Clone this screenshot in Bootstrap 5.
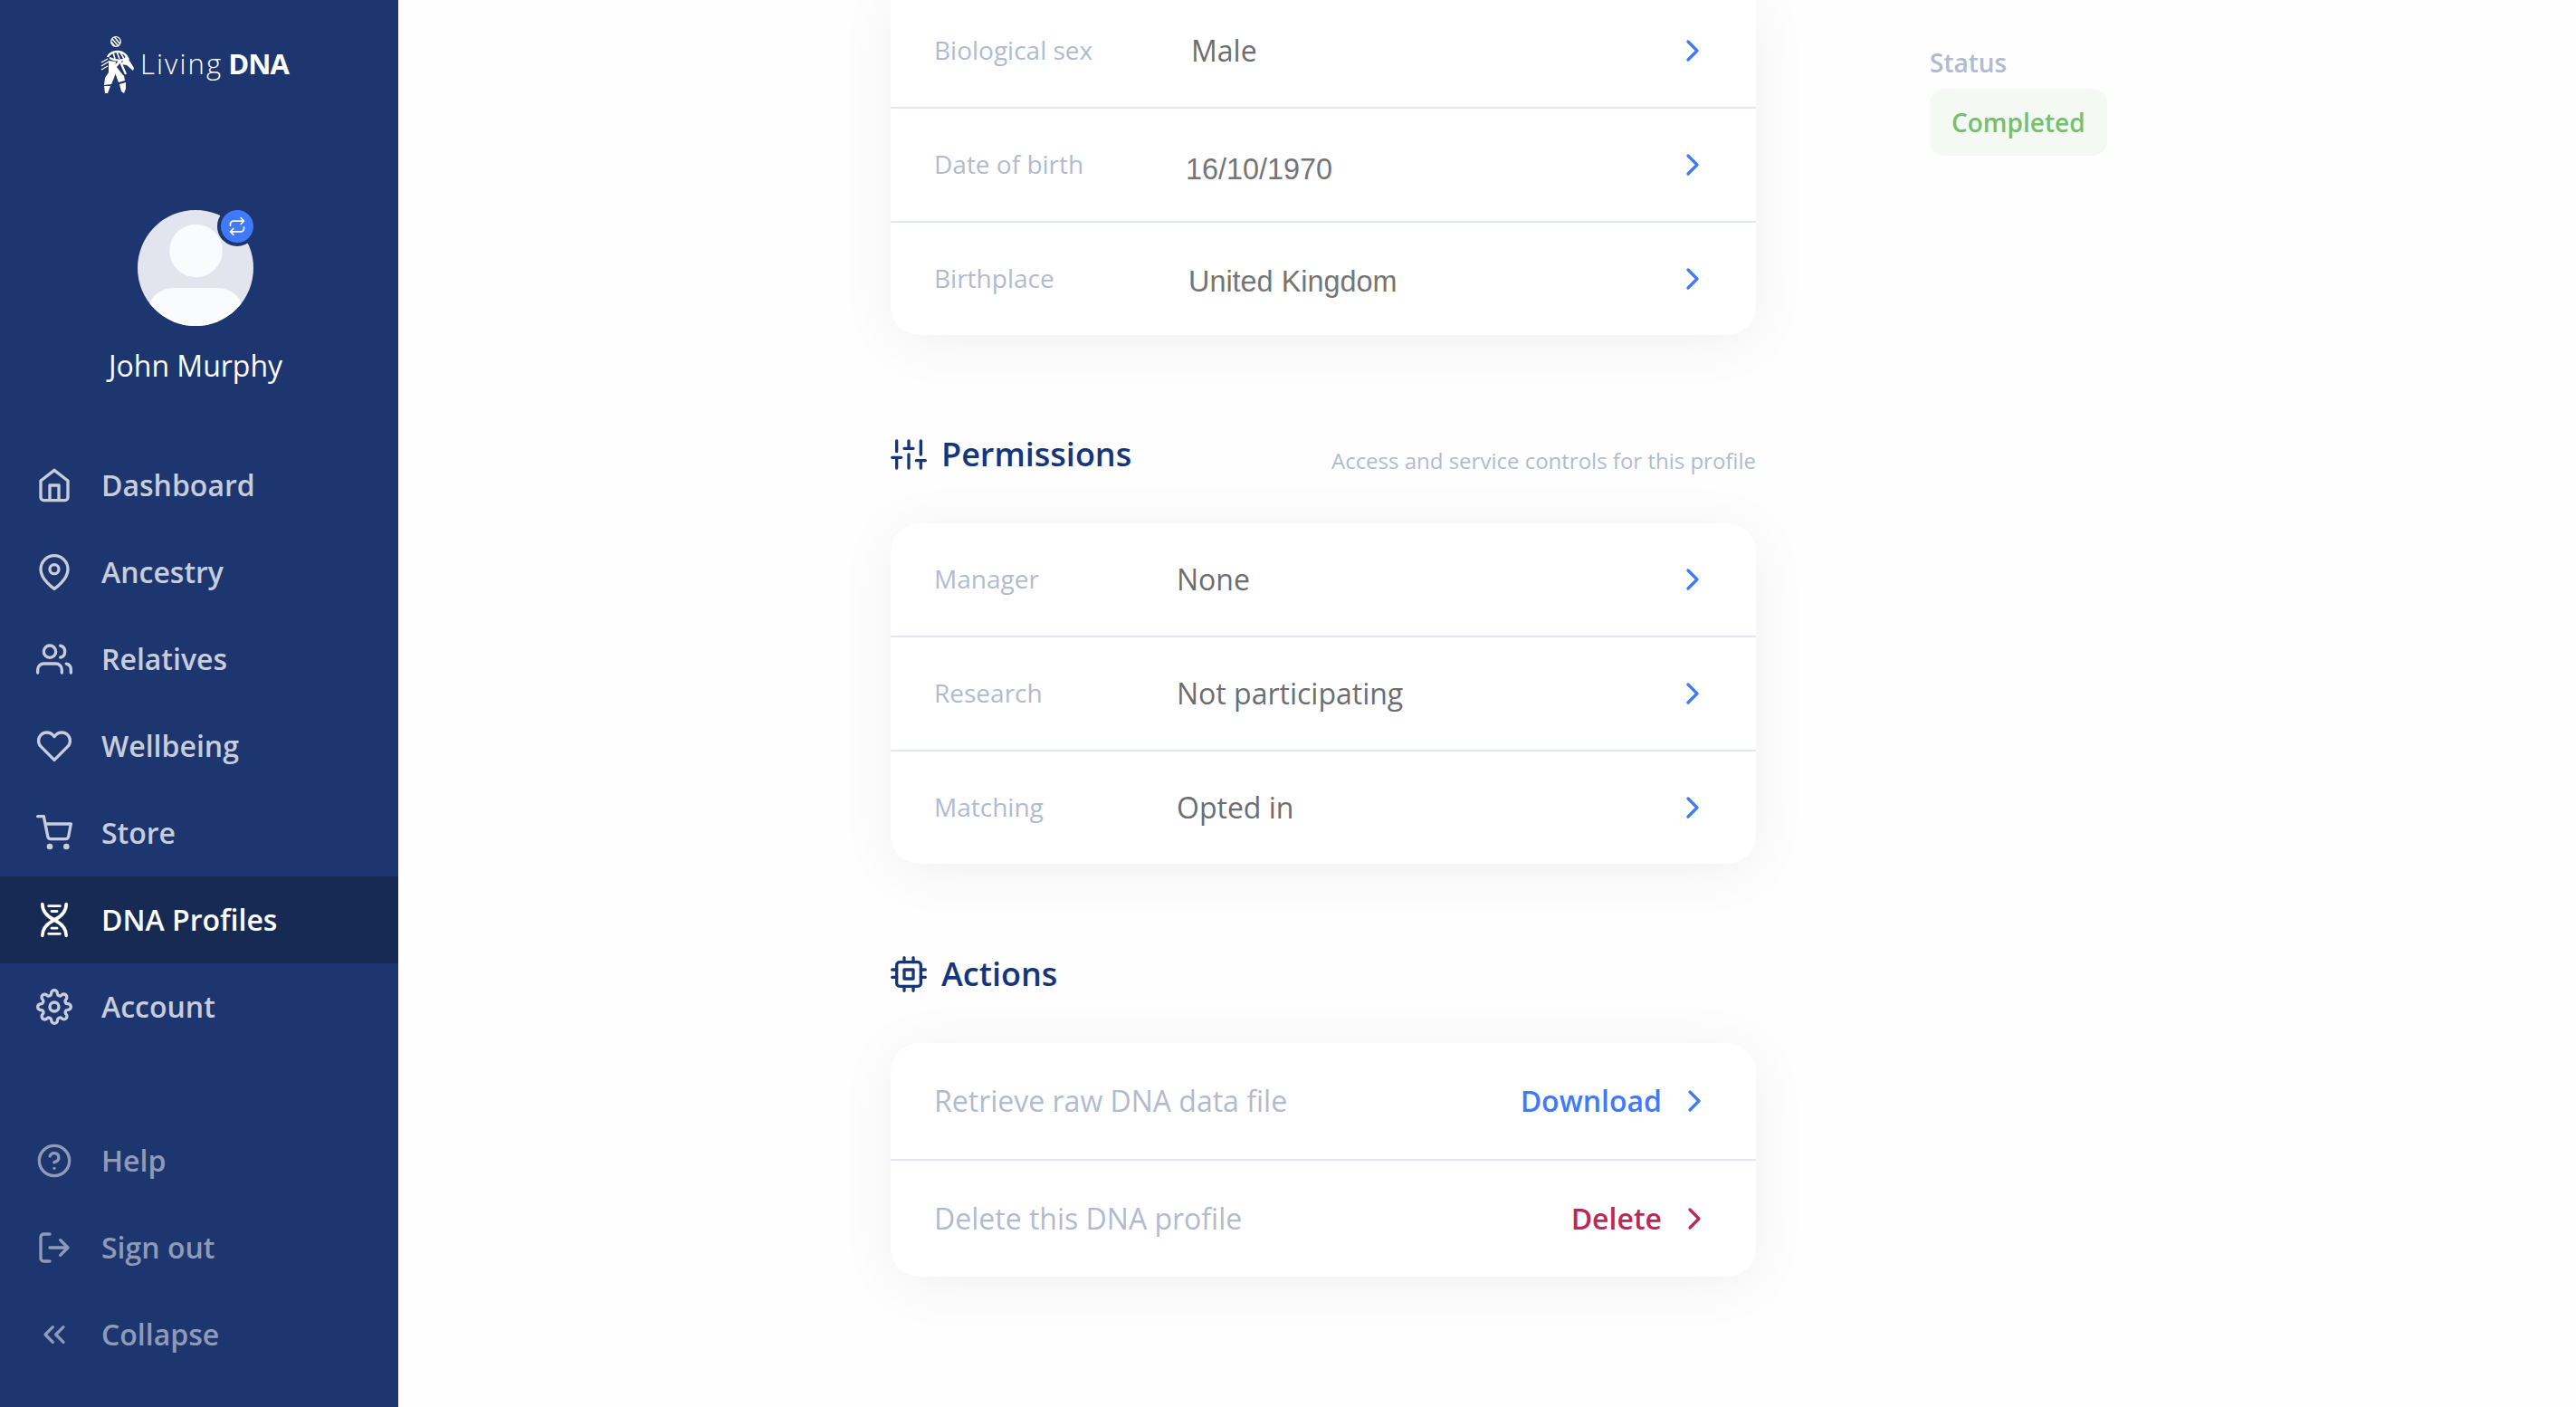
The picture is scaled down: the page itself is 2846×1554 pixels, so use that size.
<!DOCTYPE html>
<html lang="en">
<head>
    <meta charset="UTF-8">
    <meta name="viewport" content="width=device-width, initial-scale=1.0">
    <title>DNA Profiles - Living DNA</title>
    <link href="https://cdn.jsdelivr.net/npm/bootstrap@5.3.0/dist/css/bootstrap.min.css" rel="stylesheet">
    <style>
        :root {
            --navy: #1e366f;
            --navy-dark: #172a54;
            --heading: #16367b;
            --blue: #417af9;
            --red: #bd2858;
            --muted: #b0bbd1;
            --line: #e2e6ee;
            --value: #6c6d70;
        }

        body {
            font-family: "Open Sans", "Noto Sans", sans-serif;
            font-size: 32px;
            line-height: 44px;
            color: var(--value);
            background-color: #fefefe;
            height: 1554px;
            overflow: hidden;
        }

        .icon {
            width: 40px;
            height: 40px;
            fill: none;
            stroke: currentColor;
            stroke-width: 2;
            stroke-linecap: round;
            stroke-linejoin: round;
            flex-shrink: 0;
        }

        /* Sidebar */
        .sidebar {
            width: 440px;
            height: 1554px;
            background-color: var(--navy);
            color: #fff;
        }

        .brand {
            height: 72px;
            margin: 36px 0 0 108px;
        }

        .brand-figure {
            width: 44px;
            height: 72px;
            fill: none;
            stroke: #fff;
        }

        .brand-text {
            font-size: 31px;
            font-weight: 300;
            letter-spacing: 2.1px;
            margin-left: 3px;
            padding-bottom: 4px;
        }

        .brand-text b {
            font-weight: 700;
            letter-spacing: -1px;
            margin-left: -4px;
        }

        .profile {
            width: 432px;
            margin-top: 124px;
            height: 256px;
        }

        .avatar {
            width: 128px;
            height: 128px;
        }

        .switch-badge {
            width: 44px;
            height: 44px;
            top: -4px;
            right: -4px;
            border: 4px solid var(--navy);
            background-color: var(--blue);
        }

        .switch-badge .icon {
            width: 20px;
            height: 20px;
        }

        .profile-name {
            margin-top: 22px;
        }

        .side-link {
            height: 96px;
            padding-left: 40px;
            gap: 32px;
            font-weight: 600;
            color: #c7cddb;
            text-decoration: none;
        }

        .side-link.active {
            background-color: var(--navy-dark);
            color: #fff;
        }

        .side-bottom {
            margin-top: 74px;
        }

        .side-bottom .side-link {
            color: #8e9bb7;
        }

        /* Main column */
        .main-col {
            width: 956px;
            margin-left: 544px;
        }

        .panel {
            background-color: #fff;
            border-radius: 32px;
            box-shadow: 0 8px 64px rgba(0, 0, 0, 0.06);
        }

        .panel-first {
            margin-top: -6px;
            border-radius: 0 0 32px 32px;
        }

        .panel-row {
            height: 124px;
            padding: 0 50px 0 48px;
            box-sizing: content-box;
        }

        .panel-row + .panel-row {
            border-top: 2px solid var(--line);
        }

        .panel-row .icon {
            color: var(--blue);
        }

        .row-label {
            width: 268px;
            font-size: 28px;
            color: var(--muted);
            padding-bottom: 2px;
        }

        .panel-first .row-label {
            width: 284px;
        }

        .plain-value {
            font-family: "Liberation Sans", Arial, sans-serif;
            font-size: 32.4px;
            color: #757575;
            padding-top: 10px;
            margin-left: -6px;
        }

        .plain-value.place {
            padding-top: 6px;
            margin-left: -3px;
        }

        .section-head {
            height: 48px;
            margin: 98px 0 52px;
            color: var(--heading);
        }

        .panel-first + .section-head {
            margin-top: 108px;
        }

        .section-head h2 {
            font-size: 36px;
            line-height: 48px;
            font-weight: 600;
            margin: 0 0 0 16px;
        }

        .section-note {
            font-size: 24px;
            color: var(--muted);
            padding-top: 13px;
        }

        .panel-actions .panel-row {
            height: 128px;
            padding-right: 48px;
            color: var(--muted);
        }

        .action-link {
            font-weight: 600;
            color: var(--blue);
            gap: 16px;
        }

        .action-link.danger,
        .action-link.danger .icon {
            color: var(--red);
        }

        /* Status column */
        .status-col {
            margin: 47px 0 0 192px;
            font-size: 28px;
            font-weight: 600;
            color: var(--muted);
        }

        .status-pill {
            height: 74px;
            padding: 0 24px;
            margin-top: 7px;
            border-radius: 16px;
            background-color: #f4f9f4;
            color: #75bf6d;
        }
    </style>
</head>
<body>

    <div class="d-flex align-items-start">
        <nav class="sidebar d-flex flex-column flex-shrink-0">
            <div class="brand d-flex align-items-center">
                <svg class="brand-figure" viewBox="0 0 44 72">
                    <!-- head -->
                    <circle cx="20" cy="10" r="5.300" stroke-width="1.300"/>
                    <path stroke-width="1.500" d="M16 7l7 8M18.500 5l6 7.500M15 10.500l4 4.500"/>
                    <!-- shoulders and chest -->
                    <path stroke-width="2.500" d="M11 27c3-6 13-9 20-2l3 5M13 28c6 3 14 4 20 0"/>
                    <path stroke-width="1.600" d="M17 22l2 7M21 21l3 8M25 22l4 7"/>
                    <!-- arms -->
                    <path stroke-width="1.300" d="M4 33l7-4M4 37l8-5M4 41l7-4"/>
                    <path fill="#fff" stroke="none" d="M31 26l4 5 5 8-1 3-7-6-6-1z"/>
                    <!-- legs -->
                    <path fill="#fff" stroke="none" d="M12 31l8 1-1 7 1 5-2 6-3 7-8 1 1-8 4-6z"/>
                    <path stroke-width="3" d="M25 31l-6 7 9 12"/>
                    <path fill="#fff" stroke="none" d="M17 39l5 2 7 7 1 5-7 2z"/>
                    <path stroke-width="2.200" d="M24 30l7 16"/>
                    <path fill="#fff" stroke="none" d="M7 59l7 0-3 8-3 0zM24 57l7-2 0 7-2 5-3-2z"/>
                </svg>
                <span class="brand-text">Living <b>DNA</b></span>
            </div>

            <div class="profile d-flex flex-column align-items-center">
                <div class="avatar position-relative">
                    <svg width="128" height="128" viewBox="0 0 128 128" class="d-block">
                        <clipPath id="avatarClip"><circle cx="64" cy="64" r="64"/></clipPath>
                        <g clip-path="url(#avatarClip)">
                            <rect width="128" height="128" fill="#e2e5ed"/>
                            <circle cx="64.500" cy="45" r="29.300" fill="#fafbfd"/>
                            <rect x="11" y="86" width="106" height="60" rx="28" fill="#fafbfd"/>
                        </g>
                    </svg>
                    <span class="switch-badge position-absolute rounded-circle d-flex align-items-center justify-content-center">
                        <svg class="icon" viewBox="0 0 24 24"><path d="M17 1l4 4-4 4M3 11V9a4 4 0 0 1 4-4h14M7 23l-4-4 4-4M21 13v2a4 4 0 0 1-4 4H3"/></svg>
                    </span>
                </div>
                <div class="profile-name">John Murphy</div>
            </div>

            <a class="side-link d-flex align-items-center" href="#">
                <svg class="icon" viewBox="0 0 24 24"><path d="M3 9l9-7 9 7v11a2 2 0 0 1-2 2H5a2 2 0 0 1-2-2zM9 22V12h6v10"/></svg>
                Dashboard
            </a>
            <a class="side-link d-flex align-items-center" href="#">
                <svg class="icon" viewBox="0 0 24 24"><path d="M21 10c0 7-9 13-9 13s-9-6-9-13a9 9 0 0 1 18 0z"/><circle cx="12" cy="10" r="3"/></svg>
                Ancestry
            </a>
            <a class="side-link d-flex align-items-center" href="#">
                <svg class="icon" viewBox="0 0 24 24"><path d="M17 21v-2a4 4 0 0 0-4-4H5a4 4 0 0 0-4 4v2M23 21v-2a4 4 0 0 0-3-3.870M16 3.130a4 4 0 0 1 0 7.750"/><circle cx="9" cy="7" r="4"/></svg>
                Relatives
            </a>
            <a class="side-link d-flex align-items-center" href="#">
                <svg class="icon" viewBox="0 0 24 24"><path d="M20.840 4.610a5.500 5.500 0 0 0-7.780 0L12 5.670l-1.060-1.060a5.500 5.500 0 0 0-7.780 7.780l1.060 1.060L12 21.230l7.780-7.780 1.060-1.060a5.500 5.500 0 0 0 0-7.780z"/></svg>
                Wellbeing
            </a>
            <a class="side-link d-flex align-items-center" href="#">
                <svg class="icon" viewBox="0 0 24 24"><circle cx="9" cy="21" r="1"/><circle cx="20" cy="21" r="1"/><path d="M1 1h4l2.680 13.390a2 2 0 0 0 2 1.610h9.720a2 2 0 0 0 2-1.610L23 6H6"/></svg>
                Store
            </a>
            <a class="side-link active d-flex align-items-center" href="#">
                <svg class="icon" viewBox="0 0 24 24"><path stroke-width="2.200" d="M4.100 1.600c0 5.400 3.900 8.400 7.900 10.400s7.900 5 7.900 10.400M19.900 1.600c0 5.400-3.900 8.400-7.900 10.400s-7.900 5-7.900 10.400"/><path stroke-width="1.700" d="M8.200 2.800h7.600M10.200 6.300h3.600M10.200 17.500h3.600M8.200 21.200h7.600"/></svg>
                DNA Profiles
            </a>
            <a class="side-link d-flex align-items-center" href="#">
                <svg class="icon" viewBox="0 0 24 24"><circle cx="12" cy="12" r="3"/><path d="M19.400 15a1.650 1.650 0 0 0 .33 1.820l.06.06a2 2 0 0 1 0 2.830 2 2 0 0 1-2.830 0l-.06-.06a1.650 1.650 0 0 0-1.820-.33 1.650 1.650 0 0 0-1 1.510V21a2 2 0 0 1-2 2 2 2 0 0 1-2-2v-.09A1.650 1.650 0 0 0 9 19.400a1.650 1.650 0 0 0-1.820.33l-.06.06a2 2 0 0 1-2.830 0 2 2 0 0 1 0-2.830l.06-.06a1.650 1.650 0 0 0 .33-1.820 1.650 1.650 0 0 0-1.510-1H3a2 2 0 0 1-2-2 2 2 0 0 1 2-2h.09A1.650 1.650 0 0 0 4.600 9a1.650 1.650 0 0 0-.33-1.820l-.06-.06a2 2 0 0 1 0-2.830 2 2 0 0 1 2.830 0l.06.06a1.650 1.650 0 0 0 1.820.33H9a1.650 1.650 0 0 0 1-1.510V3a2 2 0 0 1 2-2 2 2 0 0 1 2 2v.09a1.650 1.650 0 0 0 1 1.510 1.650 1.650 0 0 0 1.820-.33l.06-.06a2 2 0 0 1 2.830 0 2 2 0 0 1 0 2.830l-.06.06a1.650 1.650 0 0 0-.33 1.820V9a1.650 1.650 0 0 0 1.510 1H21a2 2 0 0 1 2 2 2 2 0 0 1-2 2h-.09a1.650 1.650 0 0 0-1.510 1z"/></svg>
                Account
            </a>

            <div class="side-bottom">
                <a class="side-link d-flex align-items-center" href="#">
                    <svg class="icon" viewBox="0 0 24 24"><circle cx="12" cy="12" r="10"/><path d="M9.090 9a3 3 0 0 1 5.830 1c0 2-3 3-3 3M12 17h.01"/></svg>
                    Help
                </a>
                <a class="side-link d-flex align-items-center" href="#">
                    <svg class="icon" viewBox="0 0 24 24"><path d="M9 21H5a2 2 0 0 1-2-2V5a2 2 0 0 1 2-2h4M16 17l5-5-5-5M21 12H9"/></svg>
                    Sign out
                </a>
                <a class="side-link d-flex align-items-center" href="#">
                    <svg class="icon" viewBox="0 0 24 24"><path d="M11 17l-5-5 5-5M18 17l-5-5 5-5"/></svg>
                    Collapse
                </a>
            </div>
        </nav>

        <main class="main-col flex-shrink-0">
            <div class="panel panel-first">
                <div class="panel-row d-flex align-items-center">
                    <span class="row-label">Biological sex</span>
                    <span>Male</span>
                    <svg class="icon ms-auto" viewBox="0 0 24 24"><path d="M9 18l6-6-6-6"/></svg>
                </div>
                <div class="panel-row d-flex align-items-center">
                    <span class="row-label">Date of birth</span>
                    <span class="plain-value">16/10/1970</span>
                    <svg class="icon ms-auto" viewBox="0 0 24 24"><path d="M9 18l6-6-6-6"/></svg>
                </div>
                <div class="panel-row d-flex align-items-center">
                    <span class="row-label">Birthplace</span>
                    <span class="plain-value place">United Kingdom</span>
                    <svg class="icon ms-auto" viewBox="0 0 24 24"><path d="M9 18l6-6-6-6"/></svg>
                </div>
            </div>

            <div class="section-head d-flex align-items-center">
                <svg class="icon" viewBox="0 0 24 24"><path d="M4 21v-7M4 10V3M12 21v-9M12 8V3M20 21v-5M20 12V3M1 14h6M9 8h6M17 16h6"/></svg>
                <h2>Permissions</h2>
                <span class="section-note ms-auto">Access and service controls for this profile</span>
            </div>

            <div class="panel">
                <div class="panel-row d-flex align-items-center">
                    <span class="row-label">Manager</span>
                    <span>None</span>
                    <svg class="icon ms-auto" viewBox="0 0 24 24"><path d="M9 18l6-6-6-6"/></svg>
                </div>
                <div class="panel-row d-flex align-items-center">
                    <span class="row-label">Research</span>
                    <span>Not participating</span>
                    <svg class="icon ms-auto" viewBox="0 0 24 24"><path d="M9 18l6-6-6-6"/></svg>
                </div>
                <div class="panel-row d-flex align-items-center">
                    <span class="row-label">Matching</span>
                    <span>Opted in</span>
                    <svg class="icon ms-auto" viewBox="0 0 24 24"><path d="M9 18l6-6-6-6"/></svg>
                </div>
            </div>

            <div class="section-head d-flex align-items-center">
                <svg class="icon" viewBox="0 0 24 24"><rect x="4" y="4" width="16" height="16" rx="2"/><rect x="9" y="9" width="6" height="6"/><path d="M9 1v3M15 1v3M9 20v3M15 20v3M20 9h3M20 14h3M1 9h3M1 14h3"/></svg>
                <h2>Actions</h2>
            </div>

            <div class="panel panel-actions">
                <div class="panel-row d-flex align-items-center">
                    <span>Retrieve raw DNA data file</span>
                    <span class="action-link d-flex align-items-center ms-auto">Download
                        <svg class="icon" viewBox="0 0 24 24"><path d="M9 18l6-6-6-6"/></svg>
                    </span>
                </div>
                <div class="panel-row d-flex align-items-center">
                    <span>Delete this DNA profile</span>
                    <span class="action-link danger d-flex align-items-center ms-auto">Delete
                        <svg class="icon" viewBox="0 0 24 24"><path d="M9 18l6-6-6-6"/></svg>
                    </span>
                </div>
            </div>
        </main>

        <aside class="status-col">
            <div>Status</div>
            <div class="status-pill d-flex align-items-center">Completed</div>
        </aside>
    </div>

    <script src="https://cdn.jsdelivr.net/npm/bootstrap@5.3.0/dist/js/bootstrap.bundle.min.js"></script>
</body>
</html>
